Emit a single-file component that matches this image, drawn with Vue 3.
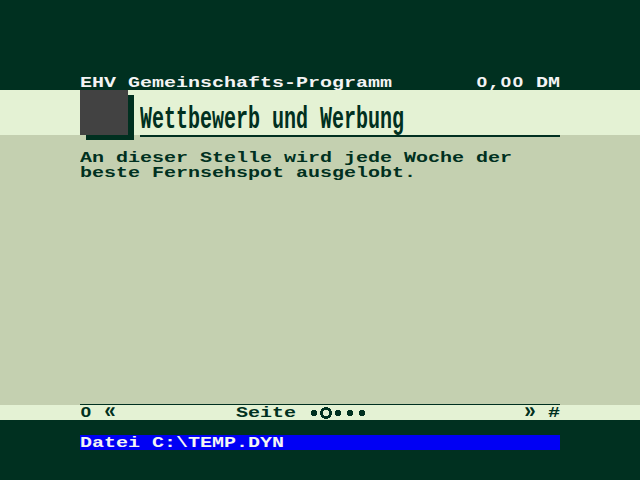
<script setup>
const lines = ['An dieser Stelle wird jede Woche der', 'beste Fernsehspot ausgelobt.']
const pages = [0, 1, 2, 3, 4]
const current = 1
</script>

<template>
  <div class="screen">
    <header class="top inner">
      <span class="text">EHV Gemeinschafts-Programm</span>
      <span class="text right"><span class="zero">0</span>,<span class="zero">0</span><span class="zero">0</span> DM</span>
    </header>

    <section class="banner inner">
      <div class="emblem"></div>
      <div class="heading">
        <h1>Wettbewerb und Werbung</h1>
      </div>
    </section>

    <main class="body inner">
      <p v-for="line in lines" :key="line" class="text">{{ line }}</p>
    </main>

    <nav class="pager inner">
      <span class="text back"><span class="zero">0</span> <span class="arrow">«</span></span>
      <span class="text label">Seite</span>
      <span class="dots">
        <svg v-for="p in pages" :key="p" class="dot" viewBox="0 0 12 15" shape-rendering="crispEdges">
          <path v-if="p === current" fill-rule="evenodd" d="M4 2H8V3H10V4H11V6H12V10H11V12H10V13H8V14H4V13H2V12H1V10H0V6H1V4H2V3H4ZM4 5V6H3V10H4V11H8V10H9V6H8V5Z" />
          <path v-else d="M4 5H8V6H9V10H8V11H4V10H3V6H4Z" />
        </svg>
      </span>
      <span class="text right next"><span class="arrow">»</span> #</span>
    </nav>

    <footer class="bottom inner">
      <div class="status"><span class="text">Datei C:\TEMP.DYN</span></div>
    </footer>
  </div>
</template>

<style>
body {
  background: #003020;
}
</style>

<style scoped>
.screen {
  width: 640px;
  height: 480px;
  overflow: hidden;
  background: #003020;
  color: #003020;
  font-family: "Liberation Mono", monospace;
  font-weight: 700;
}
.inner {
  box-sizing: border-box;
  padding-left: 80px;
  padding-right: 80px;
}
.text {
  display: block;
  width: max-content;
  margin: 0;
  height: 15px;
  font-size: 15px;
  line-height: 15px;
  white-space: pre;
  transform: scaleX(1.3332);
  transform-origin: left top;
}
.text.right {
  transform-origin: right top;
}
.zero {
  display: inline-block;
  width: 9px;
  font-family: "Liberation Sans", sans-serif;
  font-size: 14.5px;
  line-height: 12px;
  text-align: center;
  vertical-align: baseline;
}
.arrow {
  display: inline-block;
  line-height: 15px;
  transform: scaleY(1.45);
  transform-origin: center 8px;
}
.top {
  height: 90px;
  padding-top: 76px;
  display: flex;
  justify-content: space-between;
  color: #f4f4f4;
}
.banner {
  position: relative;
  z-index: 1;
  height: 45px;
  display: flex;
  background: #e4f2d4;
}
.emblem {
  flex: 0 0 48px;
  height: 45px;
  margin-right: 12px;
  background: #424242;
  box-shadow: 6px 5px 0 #003020;
}
.heading {
  flex: 1 1 0;
  min-width: 0;
  height: 45px;
  border-bottom: 2px solid #003020;
}
h1 {
  margin: 0;
  padding-top: 12px;
  width: max-content;
  font-size: 32px;
  line-height: 36px;
  font-weight: 700;
  white-space: pre;
  transform: scaleX(0.6249);
  transform-origin: left top;
}
.body {
  height: 270px;
  padding-top: 16px;
  background: #c4d0b0;
}
.pager {
  height: 15px;
  display: flex;
  background: #e4f2d4;
}
.pager .text {
  margin-top: 1px;
}
.pager::before {
  content: "";
  flex: 0 0 480px;
  height: 1px;
  margin-top: -1px;
  margin-right: -480px;
  background: #003020;
}
.back {
  flex: 0 0 156px;
}
.label {
  flex: 0 0 72px;
}
.dots {
  display: flex;
  flex: 0 0 60px;
}
.dot {
  width: 12px;
  height: 15px;
  fill: #003020;
}
.pager .next {
  margin-left: auto;
}
.bottom {
  height: 60px;
  padding-top: 15px;
}
.status {
  box-sizing: border-box;
  height: 15px;
  padding-top: 1px;
  background: #0000f4;
  color: #f4f4f4;
}
</style>
